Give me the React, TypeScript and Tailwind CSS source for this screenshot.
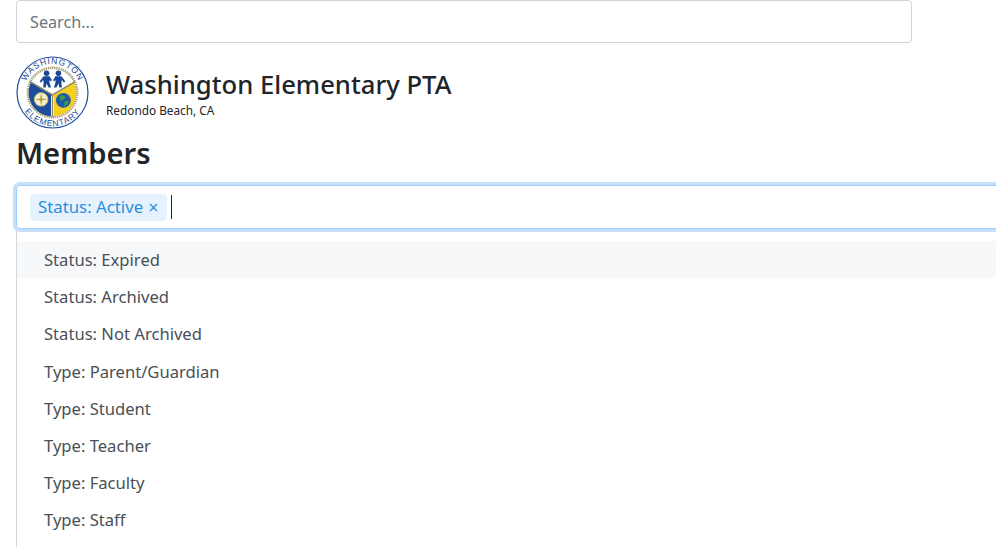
const font = { fontFamily: '"Noto Sans", "Open Sans", sans-serif' };

function Logo() {
  return (
    <svg width="73" height="73" viewBox="0 0 74 74" className="block shrink-0">
      <defs>
        <path id="arcTop" d="M 8 37 A 29 29 0 0 1 66 37" />
        <path id="arcBottom" d="M 2.8 37 A 34.2 34.2 0 0 0 71.2 37" />
      </defs>
      <circle cx="37" cy="37" r="36" fill="#fff" stroke="#1d4f9c" strokeWidth="1.2" />
      <text fontSize="8.6" fill="#1a4896" fontFamily="Liberation Sans, sans-serif" letterSpacing="0.9">
        <textPath href="#arcTop" startOffset="50%" textAnchor="middle">WASHINGTON</textPath>
      </text>
      <text fontSize="8.6" fill="#1a4896" fontFamily="Liberation Sans, sans-serif" letterSpacing="0.9">
        <textPath href="#arcBottom" startOffset="50%" textAnchor="middle">ELEMENTARY</textPath>
      </text>
      <circle cx="37" cy="37" r="25" fill="#fff" stroke="#a89f7a" strokeWidth="2.6" strokeDasharray="1.4 0.8" />
      <path d="M37 39 L15.5 26 A24 24 0 0 0 35.5 61 L35.5 41 Z" fill="#1e4c9a" />
      <path d="M37 39 L58.5 26 A24 24 0 0 1 38.5 61 L38.5 41 Z" fill="#f5cf1f" />
      <path d="M37 40 L37 62 M37 39.5 L14 26 M37 39.5 L60 26" stroke="#8d8a70" strokeWidth="1.4" fill="none" />
      <circle cx="25.5" cy="44" r="6.8" fill="#f6efcf" stroke="#d7c66f" strokeWidth="1" />
      <path d="M25.5 37.5 L26.5 43 L32 44 L26.5 45 L25.5 50.5 L24.5 45 L19 44 L24.5 43 Z" fill="#b79f3c" />
      <circle cx="48" cy="45" r="7.5" fill="#1c5aa8" />
      <path d="M45 40 Q49 39 50 42 Q48 45 46 45 Q43 44 45 40 Z M49 46 Q53 45 53.5 47 Q51 51 49 51 Z" fill="#3e9a4a" />
      <g fill="#1a4896">
        <circle cx="31" cy="17.5" r="2.8" />
        <path d="M28 20.5 L34 20.5 L36.5 24.5 L35 25.5 L34 24 L34 27 L35.5 32 L33 32 L31 28 L30 32 L27.5 32 L28 27 L27.5 24 L25.5 27 L24 25.5 Z" />
        <circle cx="43" cy="17.5" r="2.8" />
        <path d="M40 20.5 L46 20.5 L50 25.5 L48.5 27 L46.5 24 L46 27 L46.5 32 L44 32 L43 28 L41 32 L38.5 32 L40 27 L40 24 L39 25.5 L37.5 24.5 Z" />
      </g>
    </svg>
  );
}

const options = [
  "Status: Expired",
  "Status: Archived",
  "Status: Not Archived",
  "Type: Parent/Guardian",
  "Type: Student",
  "Type: Teacher",
  "Type: Faculty",
  "Type: Staff",
];

export default function App() {
  return (
    <div style={font} className="h-[547px] w-[996px] overflow-hidden bg-white pl-4 text-[#212529]">
      <input
        readOnly
        placeholder="Search..."
        style={font}
        className="block h-[43px] w-[896px] rounded border border-[#ced4da] px-[13px] text-[16.2px] text-[#495057] placeholder:text-[#6c757d]"
      />
      <div className="mt-[13px] flex h-[73px] items-center">
        <Logo />
        <div className="ml-[17px] flex flex-col pt-[2px]">
          <div className="text-[25.65px] font-medium leading-[32px] text-[#212529]">Washington Elementary PTA</div>
          <div className="mt-[2px] text-[11.8px] leading-[15px] text-[#212529]">Redondo Beach, CA</div>
        </div>
      </div>
      <h1 className="mt-[4px] text-[29.2px] font-semibold leading-[40px] text-[#212529]">Members</h1>
      <div className="w-[1200px]">
        <div className="mt-[12px] flex h-[44px] items-center rounded border border-[#9fcbfa] pl-[13px] shadow-[0_0_0_3px_#c6e0fc]">
          <span className="flex h-[27px] items-center rounded-sm bg-[#e6f3ff] pl-2 pr-[9px] text-[16.8px] text-[#2b8fdc]">
            Status: Active<span className="ml-[5px] text-[18px] leading-none">×</span>
          </span>
          <span className="ml-1 h-[24px] w-px bg-[#212529]" />
        </div>
        <div className="mt-[2px] h-[400px] border-l border-[#d6d9dc] pt-[10px]">
          {options.map((o, i) => (
            <div
              key={o}
              className={`flex h-[37.15px] items-center pl-[27px] pt-[2px] text-[16.6px] text-[#495057] ${i === 0 ? "bg-[#f7f8fa]" : ""}`}
            >
              {o}
            </div>
          ))}
        </div>
      </div>
    </div>
  );
}
